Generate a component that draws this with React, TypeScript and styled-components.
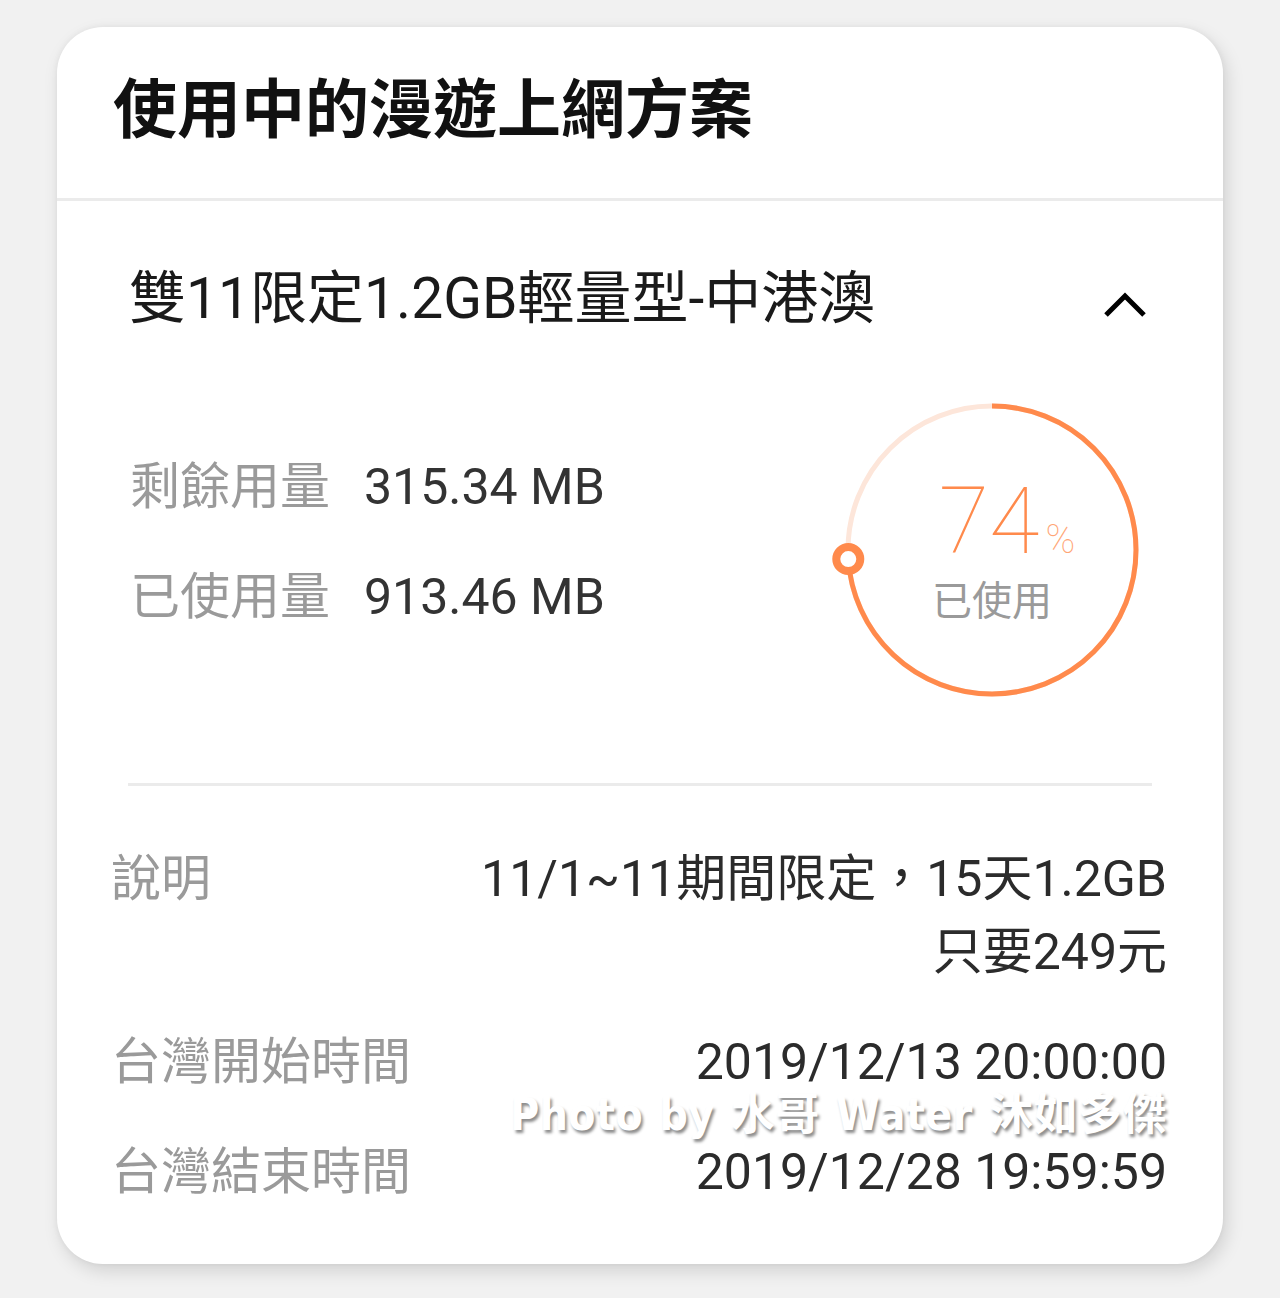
import React from "react";
import styled, { createGlobalStyle } from "styled-components";

const Global = createGlobalStyle`
  html, body { margin: 0; padding: 0; background: #f1f1f1; }
  body { font-family: Roboto, "Noto Sans CJK TC", sans-serif; }
`;

const Page = styled.div`
  width: 1280px;
  height: 1298px;
  padding-top: 27px;
  box-sizing: border-box;
  overflow: hidden;
`;

const Card = styled.div`
  position: relative;
  margin-left: 57px;
  width: 1166px;
  height: 1237px;
  background: #fff;
  border-radius: 46px;
  box-shadow: 4px 7px 18px rgba(0, 0, 0, 0.13), 0 0 6px rgba(0, 0, 0, 0.05);
  display: flex;
  flex-direction: column;
  overflow: hidden;
`;

const Header = styled.div`
  height: 174px;
  box-sizing: border-box;
  display: flex;
  align-items: center;
  padding: 0 56px 17px 56px;
  border-bottom: 3px solid #ebebeb;
`;

const Title = styled.h1`
  margin: 0;
  font-family: "Noto Sans CJK TC", sans-serif;
  font-weight: 700;
  font-size: 64px;
  line-height: 1;
  color: #111;
`;

const PlanHeader = styled.div`
  height: 194px;
  display: flex;
  align-items: center;
  justify-content: space-between;
  padding: 0 75px 0 72px;
`;

const PlanName = styled.div`
  font-family: Roboto, "Noto Sans CJK TC", sans-serif;
  font-size: 57px;
  color: #1a1a1a;
  line-height: 1;
`;

const Chevron = styled.svg`
  display: block;
  margin-top: 14px;
`;

const Usage = styled.div`
  height: 388px;
  display: flex;
  justify-content: space-between;
  align-items: flex-start;
  padding: 0 76px 0 73px;
`;

const Stats = styled.div`
  padding-top: 37px;
  display: flex;
  flex-direction: column;
`;

const StatRow = styled.div`
  height: 110px;
  display: flex;
  align-items: center;
  gap: 34px;
`;

const Label = styled.span`
  font-family: Roboto, "Noto Sans CJK TC", sans-serif;
  font-size: 50px;
  color: #9a9a9a;
  line-height: 1;
  white-space: nowrap;
`;

const Value = styled.span`
  font-family: Roboto, "Noto Sans CJK TC", sans-serif;
  font-size: 50px;
  color: #333;
  line-height: 1;
  white-space: nowrap;
`;

const Gauge = styled.div`
  position: relative;
  width: 310px;
  height: 310px;
  svg { overflow: visible; display: block; }
`;

const GaugeCenter = styled.div`
  position: absolute;
  inset: 0;
  display: flex;
  flex-direction: column;
  align-items: center;
  justify-content: center;
  padding-bottom: 6px;
  box-sizing: border-box;
`;

const Percent = styled.div`
  display: flex;
  align-items: baseline;
  margin-left: 30px;
  color: #ff8a4c;
  font-family: Roboto, sans-serif;
  font-weight: 100;
`;

const Big = styled.span`
  font-size: 92px;
  line-height: 1;
`;

const Small = styled.span`
  font-size: 40px;
  color: #ffa676;
  margin-left: 6px;
  line-height: 1;
`;

const GaugeLabel = styled.div`
  font-family: "Noto Sans CJK TC", sans-serif;
  font-size: 40px;
  color: #9a9a9a;
  line-height: 1;
  margin-top: 10px;
`;

const Divider = styled.div`
  height: 3px;
  margin: 0 71px;
  background: #ebebeb;
`;

const Details = styled.div`
  display: grid;
  grid-template-columns: auto 1fr;
  row-gap: 37px;
  padding: 57px 56px 0 54px;
`;

const DLabel = styled.div`
  font-family: Roboto, "Noto Sans CJK TC", sans-serif;
  font-size: 50px;
  line-height: 73px;
  color: #9a9a9a;
  white-space: nowrap;
`;

const DValue = styled.div`
  font-family: Roboto, "Noto Sans CJK TC", sans-serif;
  font-size: 50px;
  line-height: 73px;
  color: #2b2b2b;
  text-align: right;
`;

const Watermark = styled.div`
  position: absolute;
  right: 56px;
  top: 1066px;
  font-family: "Liberation Sans Narrow", "DejaVu Sans Condensed", "Noto Sans CJK TC", sans-serif;
  font-weight: 700;
  font-size: 44px;
  line-height: 1;
  letter-spacing: 0.5px;
  word-spacing: 2px;
  color: #fff;
  white-space: nowrap;
  text-shadow: 2px 3px 3px rgba(0, 0, 0, 0.45);
`;

const R = 144;
const C = 2 * Math.PI * R;
const pct = 0.74;
const ang = pct * 2 * Math.PI;
const dotX = 155 + R * Math.sin(ang);
const dotY = 155 - R * Math.cos(ang);

export default function App() {
  return (
    <Page>
      <Global />
      <Card>
        <Header>
          <Title>使用中的漫遊上網方案</Title>
        </Header>
        <PlanHeader>
          <PlanName>雙11限定1.2GB輕量型-中港澳</PlanName>
          <Chevron width="46" height="30" viewBox="0 0 46 30">
            <polyline points="4,25 23,6 42,25" fill="none" stroke="#000" strokeWidth="5" />
          </Chevron>
        </PlanHeader>
        <Usage>
          <Stats>
            <StatRow>
              <Label>剩餘用量</Label>
              <Value>315.34 MB</Value>
            </StatRow>
            <StatRow>
              <Label>已使用量</Label>
              <Value>913.46 MB</Value>
            </StatRow>
          </Stats>
          <Gauge>
            <svg width="310" height="310" viewBox="0 0 310 310">
              <circle cx="155" cy="155" r={R} fill="none" stroke="#fde6da" strokeWidth="5" />
              <circle
                cx="155"
                cy="155"
                r={R}
                fill="none"
                stroke="#ff8a4c"
                strokeWidth="5"
                strokeDasharray={`${C * pct} ${C}`}
                transform="rotate(-90 155 155)"
              />
              <circle cx={dotX} cy={dotY} r="12" fill="#fff" stroke="#ff8a4c" strokeWidth="8" />
            </svg>
            <GaugeCenter>
              <Percent>
                <Big>74</Big>
                <Small>%</Small>
              </Percent>
              <GaugeLabel>已使用</GaugeLabel>
            </GaugeCenter>
          </Gauge>
        </Usage>
        <Divider />
        <Details>
          <DLabel>說明</DLabel>
          <DValue>
            11/1~11期間限定，15天1.2GB
            <br />
            只要249元
          </DValue>
          <DLabel>台灣開始時間</DLabel>
          <DValue>2019/12/13 20:00:00</DValue>
          <DLabel>台灣結束時間</DLabel>
          <DValue>2019/12/28 19:59:59</DValue>
        </Details>
        <Watermark>Photo by 水哥 Water 沐如多傑</Watermark>
      </Card>
    </Page>
  );
}
